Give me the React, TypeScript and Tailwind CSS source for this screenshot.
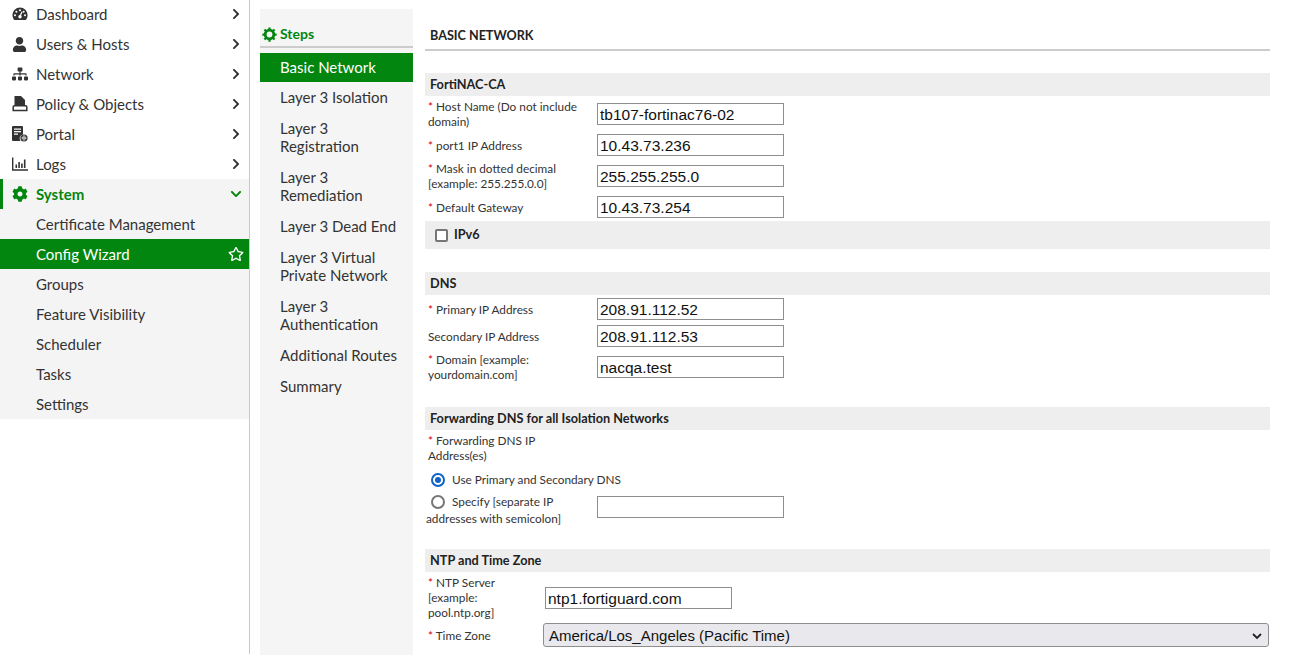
import type { ReactNode } from "react";
import { FaChevronDown, FaChevronRight, FaCog, FaRegStar, FaSitemap, FaUser } from "react-icons/fa";

function GaugeIcon() {
  return (
    <svg aria-hidden="true" className="size-4" viewBox="0 0 16 16">
      <path fill="currentColor" d="M8 1.5a7.6 7.6 0 0 1 7.6 7.6c0 1.7-.5 3.2-1.4 4.4a1.2 1.2 0 0 1-1 .5H2.8a1.2 1.2 0 0 1-1-.5A7.6 7.6 0 0 1 .4 9.1 7.6 7.6 0 0 1 8 1.5Z" />
      <g fill="#fff">
        <circle cx="8" cy="4.2" r="1" />
        <circle cx="4.4" cy="5.7" r="1" />
        <circle cx="11.6" cy="5.7" r="1" />
        <circle cx="3" cy="9.3" r="1" />
        <circle cx="13" cy="9.3" r="1" />
        <circle cx="8" cy="10.8" r="1.7" />
        <path d="m7.3 10.4 2.2-4.9 1 .4-2.1 5Z" />
      </g>
    </svg>
  );
}

function PolicyIcon() {
  return (
    <svg aria-hidden="true" className="size-4" viewBox="0 0 16 16">
      <path fill="currentColor" d="M2.5 0H9l4 4v5.2H2.5Z" />
      <path fill="none" stroke="currentColor" strokeWidth="1.5" d="M1.2 11c0-.7.5-1.2 1.2-1.2h11.2c.7 0 1.2.5 1.2 1.2v3.6H1.2Z" />
    </svg>
  );
}

function PortalIcon() {
  return (
    <svg aria-hidden="true" className="size-4" viewBox="0 0 16 16">
      <path fill="currentColor" d="M1 0h9a1 1 0 0 1 1 1v7.5a4 4 0 0 0-2.5 6.5H1a1 1 0 0 1-1-1V1a1 1 0 0 1 1-1Z" />
      <path fill="#fff" d="M2 2.5h7v1.2H2ZM2 5h7v1.2H2ZM2 7.5h4v1.2H2Z" />
      <circle cx="12" cy="12" r="3.6" fill="currentColor" />
      <path stroke="#fff" strokeWidth="0.8" fill="none" d="M9.5 12h5M12 9.5c-1.6 1.5-1.6 3.5 0 5M12 9.5c1.6 1.5 1.6 3.5 0 5" />
    </svg>
  );
}

function LogsIcon() {
  return (
    <svg aria-hidden="true" className="size-4" viewBox="0 0 16 16" fill="currentColor">
      <path d="M0 1.5h1.4v11.8H16v1.4H0Z" />
      <path d="M3.5 8.5h1.6V12H3.5ZM6.3 6h1.6v6H6.3ZM9.1 7.5h1.6V12H9.1ZM11.9 3.5h1.6V12h-1.6Z" />
    </svg>
  );
}

function StepsGear() {
  return (
    <svg aria-hidden="true" className="mb-[2px] mr-[3px] size-[15px] shrink-0" viewBox="0 0 16 16" fill="none" stroke="currentColor">
      <circle cx="8" cy="8" r="4.6" strokeWidth="3" />
      <path strokeWidth="2.4" d="M8 .4v2.4M8 13.2v2.4M.4 8h2.4M13.2 8h2.4M2.6 2.6l1.7 1.7M11.7 11.7l1.7 1.7M2.6 13.4l1.7-1.7M11.7 4.3l1.7-1.7" />
    </svg>
  );
}

const topItems: { label: string; icon: ReactNode }[] = [
  { label: "Dashboard", icon: <GaugeIcon /> },
  { label: "Users & Hosts", icon: <FaUser className="size-[15px]" /> },
  { label: "Network", icon: <FaSitemap className="size-4" /> },
  { label: "Policy & Objects", icon: <PolicyIcon /> },
  { label: "Portal", icon: <PortalIcon /> },
  { label: "Logs", icon: <LogsIcon /> },
];

const systemItems = ["Certificate Management", "Config Wizard", "Groups", "Feature Visibility", "Scheduler", "Tasks", "Settings"];

const steps: { label: string[]; active?: boolean }[] = [
  { label: ["Basic Network"], active: true },
  { label: ["Layer 3 Isolation"] },
  { label: ["Layer 3", "Registration"] },
  { label: ["Layer 3", "Remediation"] },
  { label: ["Layer 3 Dead End"] },
  { label: ["Layer 3 Virtual", "Private Network"] },
  { label: ["Layer 3", "Authentication"] },
  { label: ["Additional Routes"] },
  { label: ["Summary"] },
];

function Sidebar() {
  return (
    <aside className="h-full w-[250px] shrink-0 border-r border-[#c8c8c8] bg-white text-[15px] text-[#333] -mt-px">
      {topItems.map((item) => (
        <div key={item.label} className="flex h-[30px] items-center pl-3 pr-[7px]">
          <span className="flex w-6 shrink-0 justify-start text-[#333]">{item.icon}</span>
          <span className="flex-1">{item.label}</span>
          <FaChevronRight className="size-[12px]" />
        </div>
      ))}
      <div className="bg-[#f4f4f4]">
        <div className="flex h-[30px] items-center border-l-[3px] border-[#03860f] pl-[9px] pr-[7px] font-bold text-[#03860f]">
          <FaCog className="mr-2 size-4 shrink-0" />
          <span className="flex-1">System</span>
          <FaChevronDown className="size-[12px]" />
        </div>
        {systemItems.map((label) =>
          label === "Config Wizard" ? (
            <div key={label} className="flex h-[30px] items-center bg-[#03860f] pl-9 pr-[5px] text-white">
              <span className="flex-1">{label}</span>
              <FaRegStar className="size-4" />
            </div>
          ) : (
            <div key={label} className="flex h-[30px] items-center pl-9">
              {label}
            </div>
          ),
        )}
      </div>
    </aside>
  );
}

function StepsPanel() {
  return (
    <nav className="ml-[10px] mt-[9px] h-[646px] w-[153px] shrink-0 bg-[#f5f5f5] text-[15px] text-[#333]">
      <div className="flex h-[39px] items-end border-b-2 border-[#ccc] pb-[2px] pl-[2px] text-[14px] font-bold text-[#03860f]">
        <StepsGear />
        Steps
      </div>
      <div className="mt-[5px]">
        {steps.map((step) => (
          <div
            key={step.label[0] + (step.label[1] ?? "")}
            className={
              step.active
                ? "mb-px flex h-[29px] items-center bg-[#03860f] pl-5 text-white"
                : "mb-[3px] py-[5px] pl-5 leading-[18px]"
            }
          >
            <div>
              {step.label.map((line) => (
                <div key={line}>{line}</div>
              ))}
            </div>
          </div>
        ))}
      </div>
    </nav>
  );
}

function SectionHeader({ children }: { children: ReactNode }) {
  return <div className="flex h-[23px] items-center bg-[#eee] pl-[5px] pt-px text-[12.7px] font-bold text-[#222]">{children}</div>;
}

function Req() {
  return <span className="text-[#c00]">* </span>;
}

function TextBox({ value }: { value?: string }) {
  return (
    <input
      readOnly
      value={value ?? ""}
      className="h-[22px] w-[187px] shrink-0 border border-[#8e8e8e] bg-white px-[2px] pt-[2px] font-['Liberation_Sans',Arial,sans-serif] text-[15.5px] text-[#111] outline-none"
    />
  );
}

function FieldRow({ label, value, required, className }: { label: string[]; value: string; required?: boolean; className: string }) {
  return (
    <div className={`flex items-center ${className}`}>
      <div className="w-[172px] shrink-0 pl-[3px] text-[11.8px] leading-[15px] text-[#333]">
        {label.map((line, i) => (
          <div key={line}>
            {required && i === 0 ? <Req /> : null}
            {line}
          </div>
        ))}
      </div>
      <TextBox value={value} />
    </div>
  );
}

function FormPanel() {
  return (
    <main className="ml-3 w-[845px] shrink-0">
      <div className="mt-[28px] flex h-[23px] items-start border-b-2 border-[#ccc] pl-[5px] text-[12.6px] font-bold leading-[16px] text-[#222]">
        BASIC NETWORK
      </div>
      <div className="mt-[22px]">
        <SectionHeader>FortiNAC-CA</SectionHeader>
      </div>
      <FieldRow className="mt-[7px] h-[22px]" required label={["Host Name (Do not include", "domain)"]} value="tb107-fortinac76-02" />
      <FieldRow className="mt-[9px] h-[22px]" required label={["port1 IP Address"]} value="10.43.73.236" />
      <FieldRow className="mt-[9px] h-[22px]" required label={["Mask in dotted decimal", "[example: 255.255.0.0]"]} value="255.255.255.0" />
      <FieldRow className="mt-[9px] h-[22px]" required label={["Default Gateway"]} value="10.43.73.254" />
      <div className="mt-[3px] flex h-[28px] items-center bg-[#eee] pl-[10px] text-[12.7px] font-bold text-[#222]">
        <span className="mr-[6px] size-[13px] rounded-[2px] border-2 border-[#767676] bg-white" />
        IPv6
      </div>

      <div className="mt-[23px]">
        <SectionHeader>DNS</SectionHeader>
      </div>
      <FieldRow className="mt-[3px] h-[22px]" required label={["Primary IP Address"]} value="208.91.112.52" />
      <FieldRow className="mt-[5px] h-[22px]" label={["Secondary IP Address"]} value="208.91.112.53" />
      <FieldRow className="mt-[9px] h-[22px]" required label={["Domain [example:", "yourdomain.com]"]} value="nacqa.test" />

      <div className="mt-[29px]">
        <SectionHeader>Forwarding DNS for all Isolation Networks</SectionHeader>
      </div>
      <div className="mt-[3px] w-[160px] pl-[3px] text-[11.8px] leading-[15px] text-[#333]">
        <div>
          <Req />
          Forwarding DNS IP
        </div>
        <div>Address(es)</div>
      </div>
      <div className="mt-[9px] flex h-[16px] items-center pl-[6px] text-[11.8px] text-[#333]">
        <span className="mr-[7px] flex size-[14px] items-center justify-center rounded-full border-2 border-[#0f62c6] bg-white">
          <span className="size-[6px] rounded-full bg-[#0f62c6]" />
        </span>
        Use Primary and Secondary DNS
      </div>
      <div className="mt-[6px] flex">
        <div className="w-[172px] shrink-0 text-[11.8px] leading-[15px] text-[#333]">
          <div className="flex items-center pl-[6px]">
            <span className="mr-[7px] size-[14px] rounded-full border-2 border-[#767676] bg-white" />
            Specify [separate IP
          </div>
          <div className="mt-[2px] pl-px">addresses with semicolon]</div>
        </div>
        <div className="mt-[1px]">
          <TextBox />
        </div>
      </div>

      <div className="mt-[23px]">
        <SectionHeader>NTP and Time Zone</SectionHeader>
      </div>
      <div className="mt-[3px] flex items-center">
        <div className="w-[120px] shrink-0 pl-[3px] text-[11.8px] leading-[15px] text-[#333]">
          <div>
            <Req />
            NTP Server
          </div>
          <div>[example:</div>
          <div>pool.ntp.org]</div>
        </div>
        <TextBox value="ntp1.fortiguard.com" />
      </div>
      <div className="mt-[3px] flex items-center">
        <div className="w-[118px] shrink-0 pl-[3px] pt-px text-[11.8px] text-[#333]">
          <Req />
          Time Zone
        </div>
        <div className="relative h-[24px] w-[726px] rounded-[3px] border border-[#8e8e8e] bg-[#e9e9ed] pl-[5px] font-['Liberation_Sans',Arial,sans-serif] text-[15px] leading-[24px] text-[#111]">
          America/Los_Angeles (Pacific Time)
          <svg aria-hidden="true" className="absolute right-[6px] top-[7px] size-[10px]" viewBox="0 0 10 10" fill="none" stroke="#222" strokeWidth="1.8">
            <path d="m1 3 4 4 4-4" />
          </svg>
        </div>
      </div>
    </main>
  );
}

export default function App() {
  return (
    <div className="flex h-[655px] w-[1290px] overflow-hidden bg-white font-['Lato','Liberation_Sans',sans-serif]">
      <Sidebar />
      <StepsPanel />
      <FormPanel />
    </div>
  );
}
